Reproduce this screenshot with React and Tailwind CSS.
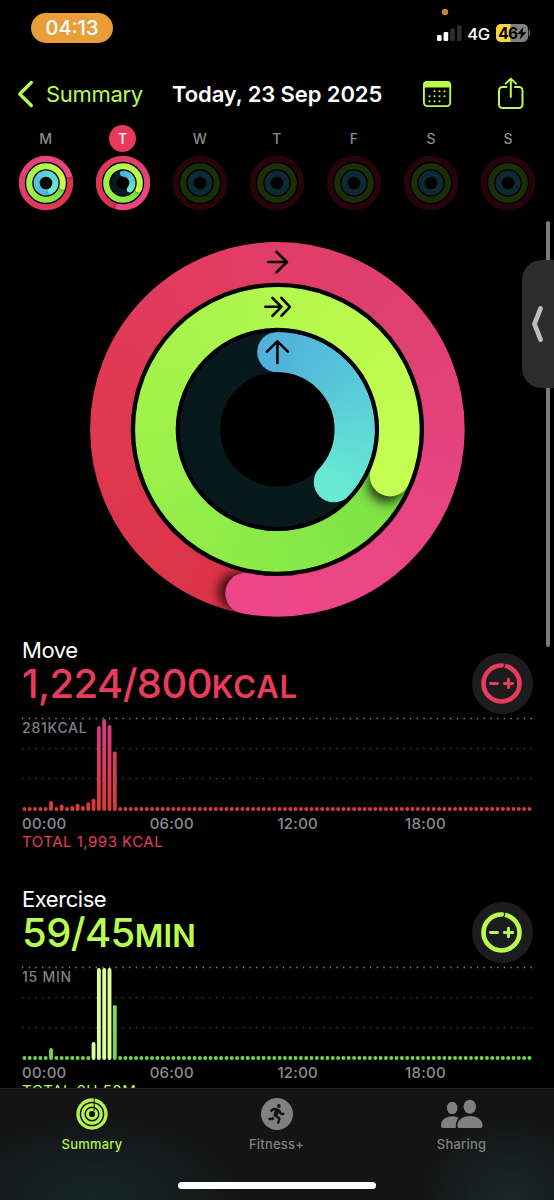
import React from 'react';
import { FaPersonRunning } from 'react-icons/fa6';

const MOVE_STOPS = ['#db3246', '#df3850', '#e23b60', '#de4072', '#e94582', '#ed4789'];
const EXERCISE_STOPS = ['#7ce043', '#8aea48', '#9cf14a', '#abf54c', '#bbfa4e', '#c4ff51'];
const STAND_STOPS = ['#50b2dc', '#57c3d9', '#5fd7d6', '#69ead4'];

const DAYS = [
  { label: 'M', rings: [70, 102, 150], full: true },
  { label: 'T', rings: [191, 113, 133], active: true },
  { label: 'W' },
  { label: 'T' },
  { label: 'F' },
  { label: 'S' },
  { label: 'S' },
];

const buildBars = (values) => Array.from({ length: 96 }, (_, i) => values[i] || 4);

const MOVE_BARS = buildBars({
  5: 10, 7: 6.5, 9: 5, 10: 7.3, 11: 5, 12: 8.7, 13: 12.3, 14: 85, 15: 92, 16: 86, 17: 59.5,
});
const EXERCISE_BARS = buildBars({ 5: 12, 13: 18, 14: 92, 15: 92, 16: 92, 17: 55 });

const polar = (r, deg) => {
  const a = ((deg - 90) * Math.PI) / 180;
  return [r * Math.cos(a), r * Math.sin(a)];
};

const mix = (stops, t) => {
  const pos = Math.min(Math.max(t, 0), 0.9999) * (stops.length - 1);
  const i = Math.floor(pos);
  const f = pos - i;
  const channel = (hex, n) => parseInt(hex.slice(1 + n * 2, 3 + n * 2), 16);
  const rgb = [0, 1, 2].map((n) =>
    Math.round(channel(stops[i], n) * (1 - f) + channel(stops[i + 1], n) * f)
  );
  return `rgb(${rgb.join(',')})`;
};

// One activity ring. A closed ring is a whole lap that ends at `head`.
// Slices are a bit wider than the ring, the mask trims them to a clean edge.
const Ring = ({ id, r, width, head, stops, closed, track, shadow = 0.8 }) => {
  const start = closed ? head - 360 : 0;
  const step = 2;
  const overlap = r < 30 ? 14 : 3;
  const count = Math.ceil((head - start) / step);
  const slices = Array.from({ length: count }, (_, i) => {
    const from = start + i * step;
    const to = Math.min(from + step + overlap, head);
    const [x1, y1] = polar(r, from);
    const [x2, y2] = polar(r, to);
    return (
      <path
        key={i}
        d={`M${x1} ${y1}A${r} ${r} 0 0 1 ${x2} ${y2}`}
        stroke={mix(stops, i / count)}
        strokeWidth={closed ? width + 1 : width}
        fill="none"
      />
    );
  });
  const [hx, hy] = polar(r, head);
  const [sx, sy] = polar(r, head + (width * 12) / r);
  const [bx, by] = polar(r, start);
  const cap = <circle cx={hx} cy={hy} r={width / 2} fill={stops[stops.length - 1]} />;

  return (
    <>
      <mask id={id} maskUnits="userSpaceOnUse" x="-200" y="-200" width="400" height="400">
        <circle r={r} fill="none" stroke="white" strokeWidth={width} />
      </mask>
      <g mask={`url(#${id})`}>
        {!closed && (
          <>
            <circle r={r} fill="none" stroke={track} strokeWidth={width + 1} />
            <circle cx={bx} cy={by} r={width / 2} fill={stops[0]} />
            {cap}
          </>
        )}
        {slices}
        {closed && (
          <>
            <circle
              cx={sx}
              cy={sy}
              r={width * 0.45}
              fill="black"
              opacity={shadow}
              style={{ filter: `blur(${width * 0.15}px)` }}
            />
            {cap}
            {slices.slice(-Math.ceil(count / 5))}
          </>
        )}
      </g>
    </>
  );
};

const ActivityRings = () => (
  <svg className="h-[376px] w-[376px]" viewBox="-188.4 -188.4 376 376">
    <Ring id="move" r={167} width={40.6} head={191} stops={MOVE_STOPS} closed />
    <Ring id="exercise" r={122} width={40.6} head={112.5} stops={EXERCISE_STOPS} closed />
    <Ring id="stand" r={77.3} width={40.4} head={133} stops={STAND_STOPS} track="#08191e" />
    <g fill="none" stroke="black" strokeWidth="2.6" strokeLinecap="round" strokeLinejoin="round">
      <path d="M-9 -167.4H9M-1 -177.6L9.5 -167.4L-1 -157" />
      <path d="M-12 -122.6H3.5M-5 -131.6L4 -122.6L-5 -113.6M4 -131.6L12.5 -122.6L4 -113.6" />
      <path d="M0 -66.5V-87.5M-10.5 -77.8L0 -88L10.5 -77.8" />
    </g>
  </svg>
);

const MiniRings = ({ day, index }) => (
  <svg className="h-14 w-14" viewBox="-28 -28 56 56">
    {day.rings ? (
      <>
        <Ring id={`move-${index}`} r={24.2} width={6.1} head={day.rings[0]} stops={MOVE_STOPS} shadow={0.4} closed />
        <Ring id={`exercise-${index}`} r={16.8} width={6.1} head={day.rings[1]} stops={EXERCISE_STOPS} shadow={0.4} closed />
        <Ring id={`stand-${index}`} r={9.4} width={6.1} head={day.rings[2]} stops={STAND_STOPS} shadow={0.2} closed={day.full} track="#08191e" />
      </>
    ) : (
      <g fill="none" strokeWidth="6.1">
        <circle r="24.2" stroke="#27040a" />
        <circle r="16.8" stroke="#1c2e08" />
        <circle r="9.4" stroke="#0d2a35" />
      </g>
    )}
  </svg>
);

const StatusBar = () => (
  <div className="flex h-[66px] items-start justify-between pl-[31px] pr-[24px]">
    <div className="mt-[13px] flex h-[30px] w-[82px] items-center justify-center rounded-full bg-[#e99e3a] text-[20px] font-medium text-white">
      04:13
    </div>
    <svg className="h-[46px] w-[96px]" viewBox="434 0 96 46">
      <circle cx="445" cy="12" r="3.2" fill="#c08a35" />
      <g fill="white">
        <rect x="437" y="35" width="4.6" height="6" rx="1.2" />
        <rect x="443.6" y="32" width="4.6" height="9" rx="1.2" />
        <rect x="450.3" y="28.5" width="4.6" height="12.5" rx="1.2" fill="#2e2e2e" />
        <rect x="457" y="25.3" width="4.6" height="15.7" rx="1.2" fill="#2e2e2e" />
      </g>
      <text x="467.3" y="40" fontSize="16.5" fontWeight="500" letterSpacing="-0.3" fill="white">4G</text>
      <rect x="496" y="24" width="32" height="18" rx="5" fill="#808080" />
      <path d="M501 24H510.5V42H501a5 5 0 0 1-5-5V29a5 5 0 0 1 5-5Z" fill="#fdd63f" />
      <path d="M529.3 30.5a3.5 3.5 0 0 1 0 5Z" fill="#808080" stroke="#808080" />
      <text x="498.3" y="38.7" fontSize="15.5" fontWeight="700" letterSpacing="-0.8" fill="black">46</text>
      <path d="M523.5 27L517.3 34H521L519.8 39.5L526.3 32.3H522.5Z" fill="black" />
    </svg>
  </div>
);

const NavBar = () => (
  <div className="flex h-14 items-center text-[22px]">
    <svg className="ml-[17px] h-[28px] w-[18px] text-[#b9fc50]" viewBox="0 0 18 28" fill="none" stroke="currentColor" strokeWidth="3.3" strokeLinecap="round" strokeLinejoin="round">
      <path d="M14.3 2.5L2.7 14L14.3 25.5" />
    </svg>
    <span className="ml-[11px] w-[126px] tracking-[-0.3px] text-[#b9fc50]">Summary</span>
    <h1 className="w-[250px] whitespace-nowrap font-semibold tracking-[-0.1px] text-white">Today, 23 Sep 2025</h1>
    <svg className="h-[28px] w-[30px] text-[#b9fc50]" viewBox="422 80 30 28">
      <rect x="423.9" y="81.9" width="26.3" height="24.2" rx="3.5" fill="none" stroke="currentColor" strokeWidth="1.9" />
      <path d="M423 87.5V85a4 4 0 0 1 4-4H447.1a4 4 0 0 1 4 4V87.5Z" fill="currentColor" />
      <path d="M434.5 91.3H446M429.5 96.3H446M429.5 101.2H440" stroke="currentColor" strokeWidth="2.1" strokeDasharray="0 5" strokeLinecap="round" />
    </svg>
    <svg className="ml-[45px] h-[34px] w-[28px] text-[#b9fc50]" viewBox="497 77 28 34" fill="none" stroke="currentColor" strokeWidth="2" strokeLinecap="round" strokeLinejoin="round">
      <path d="M506.5 87H502.5a3.5 3.5 0 0 0-3.5 3.5V104.5a3.5 3.5 0 0 0 3.5 3.5H519a3.5 3.5 0 0 0 3.5-3.5V90.5a3.5 3.5 0 0 0-3.5-3.5H515" />
      <path d="M510.8 97V78.8M505.6 83.6L510.8 78.6L516 83.6" />
    </svg>
  </div>
);

const WeekStrip = () => (
  <div className="flex pl-[7px]">
    {DAYS.map((day, i) => (
      <div key={i} className="flex w-[77.1px] shrink-0 flex-col items-center gap-[3px]">
        <span
          className={`flex h-[27px] w-[27px] items-center justify-center rounded-full text-[14px] font-medium ${
            day.active ? 'bg-[#e93858] text-white' : 'text-[#8a8a8f]'
          }`}
        >
          {day.label}
        </span>
        <MiniRings day={day} index={i} />
      </div>
    ))}
  </div>
);

const AdjustGoalButton = ({ label }) => (
  <button aria-label={label} className="flex h-[61px] w-[61px] shrink-0 items-center justify-center rounded-full bg-[#1c1c1e]">
    <svg className="h-[42px] w-[42px]" viewBox="-20.5 -20.5 42 42" fill="none" stroke="currentColor" strokeLinecap="round">
      <circle r="18" strokeWidth="4.6" />
      <path d="M3 -21V-17.5Q3 -16.5 1.5 -15.5" stroke="#1c1c1e" strokeWidth="1.3" />
      <path d="M-11 0H-4M2.8 0H11.2M7 -4.2V4.2" strokeWidth="2.9" />
    </svg>
  </button>
);

const BarChart = ({ id, bars, from, to, pale }) => (
  <svg className="h-[98px] w-[514px]" viewBox="20 0 514 98">
    <defs>
      <linearGradient id={id} gradientUnits="userSpaceOnUse" x1="0" y1="96" x2="0" y2="4">
        <stop offset="0" stopColor={from} />
        <stop offset="1" stopColor={to} />
      </linearGradient>
    </defs>
    {[3.5, 33.6, 63.7].map((y, i) => (
      <line key={y} x1="22" x2="532" y1={y} y2={y} stroke={i === 0 ? '#8e8e8e' : '#4d4d4d'} strokeWidth="1.3" strokeDasharray="1.3 5.39" />
    ))}
    {bars.map((h, i) => (
      <rect
        key={i}
        x={22.5 + i * 5.316}
        y={96 - h}
        width="3.9"
        height={h}
        rx="1.9"
        fill={pale && pale.includes(i) ? '#dafc9c' : `url(#${id})`}
      />
    ))}
  </svg>
);

const Metric = ({ name, value, unit, peak, total, color, unitSpacing, chart }) => (
  <section className={`h-[249px] pl-[22px] ${color}`}>
    <div className="flex justify-between pr-[21.5px]">
      <div>
        <h2 className="h-[26px] text-[22px] leading-[26px] tracking-[-0.45px] text-white">{name}</h2>
        <p className="flex h-[42px] items-baseline whitespace-nowrap text-[40px] font-medium leading-[42px]">
          <span className="tracking-[-0.6px]">{value}</span>
          <span className={`text-[31px] font-semibold ${unitSpacing}`}>{unit}</span>
        </p>
      </div>
      <div className="mt-[16px]">
        <AdjustGoalButton label={`Change ${name} goal`} />
      </div>
    </div>
    <div className="-ml-[2px] mt-px grid">
      <div className="col-start-1 row-start-1 h-[99px]">{chart}</div>
      <span className="col-start-1 row-start-1 ml-[2px] mt-[4px] text-[14px] font-medium leading-[18px] tracking-[0.75px] text-[#808086]">{peak}</span>
    </div>
    <div className="flex pt-px text-[15px] font-medium leading-[18px] tracking-[0.25px] text-[#8a8a90]">
      {['00:00', '06:00', '12:00', '18:00'].map((time) => (
        <span key={time} className="w-[127.7px]">{time}</span>
      ))}
    </div>
    <p className="text-[15px] leading-[18px] tracking-[0.5px]">{total}</p>
  </section>
);

const SummaryIcon = () => (
  <svg className="h-8 w-8" viewBox="-16 -16 32 32" fill="none" stroke="currentColor">
    <circle r="14" strokeWidth="3.4" />
    <circle r="9.2" strokeWidth="3.2" />
    <circle r="4.6" strokeWidth="3" />
    <path d="M2.2 -16V-3" stroke="#1a1b18" strokeWidth="1" />
  </svg>
);

const SharingIcon = () => (
  <svg className="h-8 w-[44px]" viewBox="440 1098 44 32" fill="currentColor">
    <ellipse cx="452.2" cy="1108" rx="5.3" ry="6.2" />
    <path d="M441 1125.5C441 1120 446 1116.3 452.2 1116.3C454.5 1116.3 456.8 1116.9 458.6 1118C456.5 1120.3 455.5 1123 455.9 1128H443Q441 1128 441 1125.5Z" />
    <ellipse cx="469.8" cy="1106.7" rx="6.2" ry="7" />
    <path d="M457.3 1125.5C457.3 1120 463 1116 470 1116S482.6 1120 482.6 1125.5Q482.6 1128 480.5 1128H459.5Q457.3 1128 457.3 1125.5Z" />
  </svg>
);

const TabBar = () => (
  <footer className="flex h-[112px] shrink-0 flex-col items-center border-t border-[#222] bg-[#141414] bg-[radial-gradient(ellipse_150px_85px_at_95px_112px,#152728,transparent),radial-gradient(ellipse_90px_80px_at_510px_108px,#1a2828,transparent)] text-[#808080]">
    <nav className="flex w-full pt-[9px] text-[13px] font-medium leading-4 tracking-[0.2px]">
      <a className="flex w-[184px] flex-col items-center gap-[6px] text-[#b4f250]">
        <SummaryIcon />
        Summary
      </a>
      <a className="flex w-[185px] flex-col items-center gap-[6px]">
        <span className="flex h-8 w-8 items-center justify-center rounded-full bg-[#808080] text-[#141414]">
          <FaPersonRunning className="h-5 w-5" />
        </span>
        Fitness+
      </a>
      <a className="flex w-[185px] flex-col items-center gap-[6px]">
        <SharingIcon />
        Sharing
      </a>
    </nav>
    <div className="mt-[30px] h-[7px] w-[198px] rounded-full bg-white" />
  </footer>
);

const App = () => {
  return (
    <div className="relative flex h-[1200px] w-[554px] flex-col overflow-hidden bg-black font-['Inter',sans-serif]">
      <StatusBar />
      <NavBar />
      <main className="flex-1 overflow-hidden pt-[3px]">
        <WeekStrip />
        <div className="mt-[30px] flex justify-center">
          <ActivityRings />
        </div>
        <div className="mt-[20px]">
          <Metric
            name="Move"
            value="1,224/800"
            unit="KCAL"
            peak="281KCAL"
            total="TOTAL 1,993 KCAL"
            color="text-[#e73c5c]"
            unitSpacing="tracking-[0.8px]"
            chart={<BarChart id="move-bars" bars={MOVE_BARS} from="#dc3a32" to="#d03c86" />}
          />
          <Metric
            name="Exercise"
            value="59/45"
            unit="MIN"
            peak="15 MIN"
            total="TOTAL 2H 50M"
            color="text-[#b9fc50]"
            unitSpacing="tracking-[0.2px]"
            chart={<BarChart id="exercise-bars" bars={EXERCISE_BARS} from="#70d64e" to="#8fe04a" pale={[13, 14, 15, 16]} />}
          />
        </div>
      </main>
      <TabBar />

      {/* Scroll indicator and side handle float over the page */}
      <div className="absolute right-[4px] top-[221px] h-[426px] w-[4px] rounded-full bg-[#7b7b7b]" />
      <div className="absolute right-0 top-[260px] flex h-[128px] w-[32px] items-center rounded-l-[20px] bg-[#2c2c2c] pl-[8px]">
        <svg className="h-[38px] w-[16px]" viewBox="0 0 16 38" fill="none" stroke="#bdbdc0" strokeWidth="4.8" strokeLinecap="round" strokeLinejoin="round">
          <path d="M10.5 3.5L4.5 19L10.5 34.5" />
        </svg>
      </div>
    </div>
  );
};

export default App;
